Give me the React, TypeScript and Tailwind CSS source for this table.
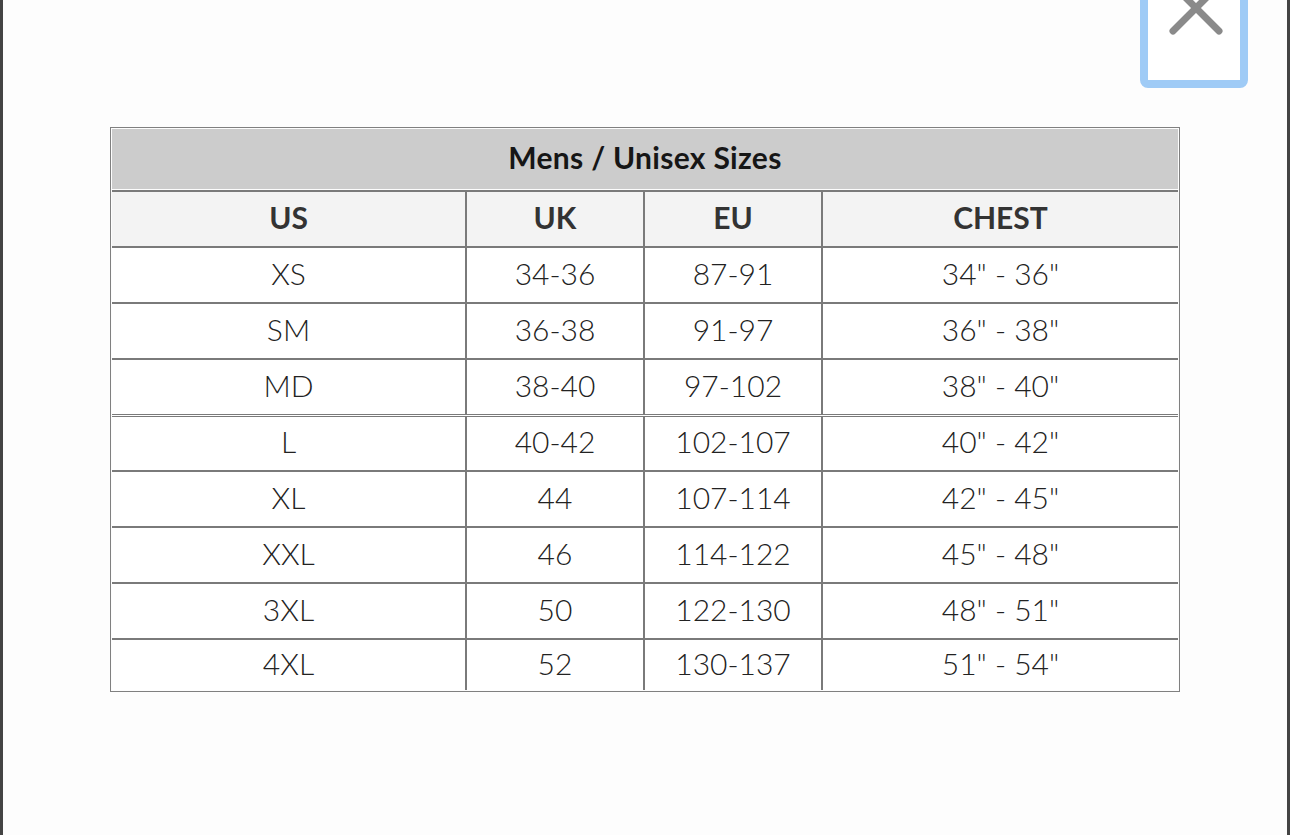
const rows: [string, string, string, string][] = [
  ['XS', '34-36', '87-91', '34" - 36"'],
  ['SM', '36-38', '91-97', '36" - 38"'],
  ['MD', '38-40', '97-102', '38" - 40"'],
  ['L', '40-42', '102-107', '40" - 42"'],
  ['XL', '44', '107-114', '42" - 45"'],
  ['XXL', '46', '114-122', '45" - 48"'],
  ['3XL', '50', '122-130', '48" - 51"'],
  ['4XL', '52', '130-137', '51" - 54"'],
];

const cols = 'grid grid-cols-[355px_178px_178px_1fr]';

function CloseButton() {
  return (
    <div className="absolute left-[1137px] top-[-40px] h-[128px] w-[108px] rounded-[8px] border-[8px] border-[#9fcbf6] bg-white">
      <svg className="absolute left-[20px] top-[12px]" width="56" height="56" viewBox="0 0 56 56">
        <path d="M5 5 L51 51 M51 5 L5 51" stroke="#8a8a8a" strokeWidth="7" strokeLinecap="round" />
      </svg>
    </div>
  );
}

export default function App() {
  return (
    <div
      className="relative h-[835px] w-[1290px] overflow-hidden border-x-[3px] border-[#444] bg-[#fdfdfd]"
      style={{ fontFamily: 'Lato, "Open Sans", sans-serif' }}
    >
      <CloseButton />

      <div className="ml-[107px] mt-[127px] w-[1070px] border border-[#808080] p-px">
        {/* title row */}
        <div className="flex h-[60px] items-center justify-center bg-[#cccccc] pb-[3px] text-[30px] font-bold tracking-[0.3px] text-[#161616]">
          Mens / Unisex Sizes
        </div>

        {/* column headers */}
        <div className={`${cols} mt-px h-[56px] border-t-2 border-[#7a7a7a] bg-[#f3f3f3] text-[30px] font-bold text-[#333]`}>
          {['US', 'UK', 'EU', 'CHEST'].map((h, i) => (
            <div
              key={h}
              className={`flex items-center justify-center pb-[4px] ${i < 3 ? 'border-r-2 border-[#7a7a7a]' : ''}`}
            >
              {h}
            </div>
          ))}
        </div>

        {rows.map((r, ri) => (
          <div
            key={r[0]}
            className={`${cols} ${ri === rows.length - 1 ? 'h-[52px]' : 'h-[56px]'} border-t-2 ${ri === 3 ? 'border-double border-t-[3px]' : ''} border-[#7a7a7a] bg-white text-[30px] font-light text-[#222]`}
          >
            {r.map((c, i) => (
              <div
                key={i}
                className={`flex items-center justify-center pb-[4px] ${i < 3 ? 'border-r-2 border-[#7a7a7a]' : ''}`}
              >
                {c}
              </div>
            ))}
          </div>
        ))}
      </div>
    </div>
  );
}
